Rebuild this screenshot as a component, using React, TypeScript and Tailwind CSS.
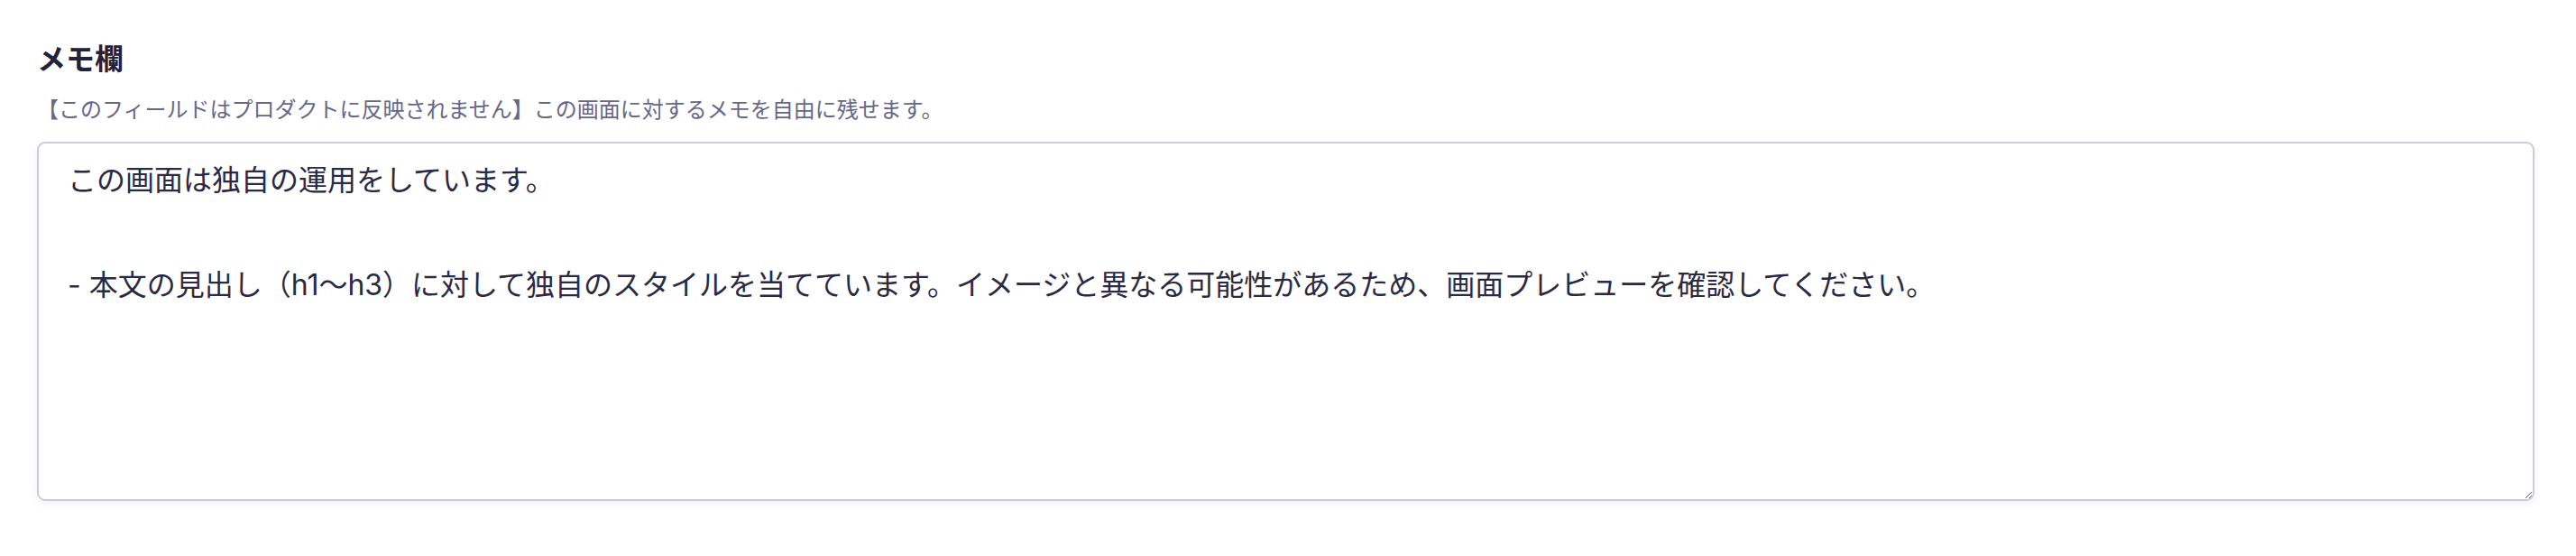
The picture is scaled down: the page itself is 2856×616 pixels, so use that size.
export default function App() {
  const memo =
    "この画面は独自の運用をしています。\n\n- 本文の見出し（h1〜h3）に対して独自のスタイルを当てています。イメージと異なる可能性があるため、画面プレビューを確認してください。";

  return (
    <div className="min-h-screen bg-white pl-[41px] pr-[46px] pt-[44px] font-['Inter','Noto_Sans_CJK_JP',sans-serif]">
      {/* memo field */}
      <label className="block text-[32px] leading-[44px] font-bold text-[#22223a]">メモ欄</label>
      <p className="mt-[16px] text-[24px] leading-[36px] text-[#66678a]">
        【このフィールドはプロダクトに反映されません】この画面に対するメモを自由に残せます。
      </p>
      <textarea
        defaultValue={memo}
        className="mt-[17px] block w-full h-[398px] rounded-[9px] border-2 border-[#cacce0] bg-white px-[32px] py-[12px] text-[32px] leading-[58px] text-[#2a2a44] shadow-[0_3px_8px_rgba(40,40,80,0.06)] outline-none font-['Inter','Noto_Sans_CJK_JP',sans-serif]"
      />
    </div>
  );
}
